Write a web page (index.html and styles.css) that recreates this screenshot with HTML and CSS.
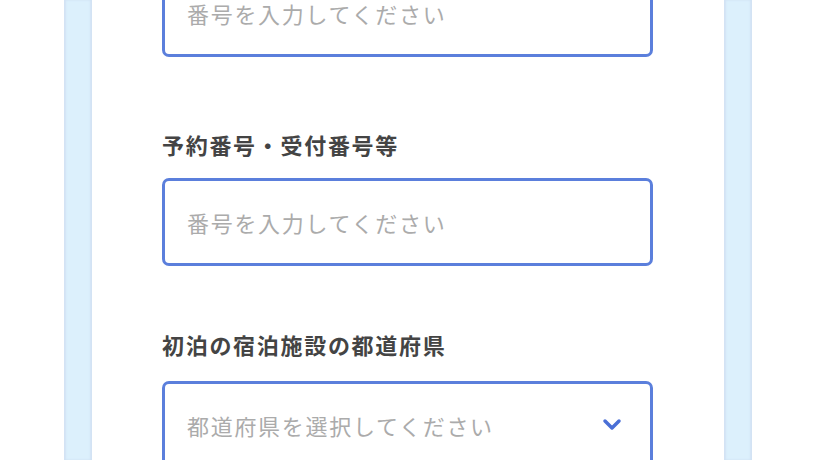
FILE: index.html
```html
<!DOCTYPE html>
<html lang="ja">
<head>
<meta charset="utf-8">
<link rel="stylesheet" href="styles.css">
</head>
<body>
<div class="page">
  <div class="gutter"></div>
  <div class="strip"></div>
  <main class="content">
    <div class="field field-first">
      <div class="box"><span class="placeholder">番号を入力してください</span></div>
    </div>
    <div class="field field-second">
      <label class="label">予約番号・受付番号等</label>
      <div class="box"><span class="placeholder">番号を入力してください</span></div>
    </div>
    <div class="field field-third">
      <label class="label">初泊の宿泊施設の都道府県</label>
      <div class="box select">
        <span class="placeholder">都道府県を選択してください</span>
        <svg class="chevron" width="20" height="14" viewBox="0 0 20 14"><path d="M3 3 L10 10 L17 3" fill="none" stroke="#4a6fd6" stroke-width="3.5" stroke-linecap="round" stroke-linejoin="round"/></svg>
      </div>
    </div>
  </main>
  <div class="strip"></div>
</div>
</body>
</html>
```
FILE: styles.css
```css
html, body {
  margin: 0;
  padding: 0;
  background: #ffffff;
  height: 460px;
  overflow: hidden;
}
body {
  font-family: "Noto Sans CJK JP", "Noto Sans", sans-serif;
}
.page {
  display: flex;
  height: 460px;
}
.gutter {
  width: 64px;
  flex: none;
}
.strip {
  width: 28px;
  flex: none;
  background: #dcf0fc;
  box-shadow: inset 2px 0 2px #d2e2f4, inset -2px 0 2px #d2e2f4;
}
.content {
  width: 632px;
  flex: none;
  padding-left: 70px;
  box-sizing: border-box;
  background: #ffffff;
}
.field {
  display: flex;
  flex-direction: column;
  gap: 19px;
  width: 491px;
}
.field-first {
  margin-top: -31px;
}
.field-second {
  margin-top: 72px;
}
.field-third {
  margin-top: 63px;
  gap: 22px;
}
.label {
  font-size: 22px;
  line-height: 30px;
  font-weight: 700;
  color: #444444;
  letter-spacing: 1.7px;
}
.box {
  height: 88px;
  box-sizing: border-box;
  border: 3px solid #5b7fdc;
  border-radius: 7px;
  display: flex;
  align-items: center;
  padding: 0 22px;
  justify-content: space-between;
}
.placeholder {
  font-size: 22px;
  color: #ababab;
  letter-spacing: 1.7px;
}
.select {
  padding-right: 28px;
}
.chevron {
  display: block;
}
```
